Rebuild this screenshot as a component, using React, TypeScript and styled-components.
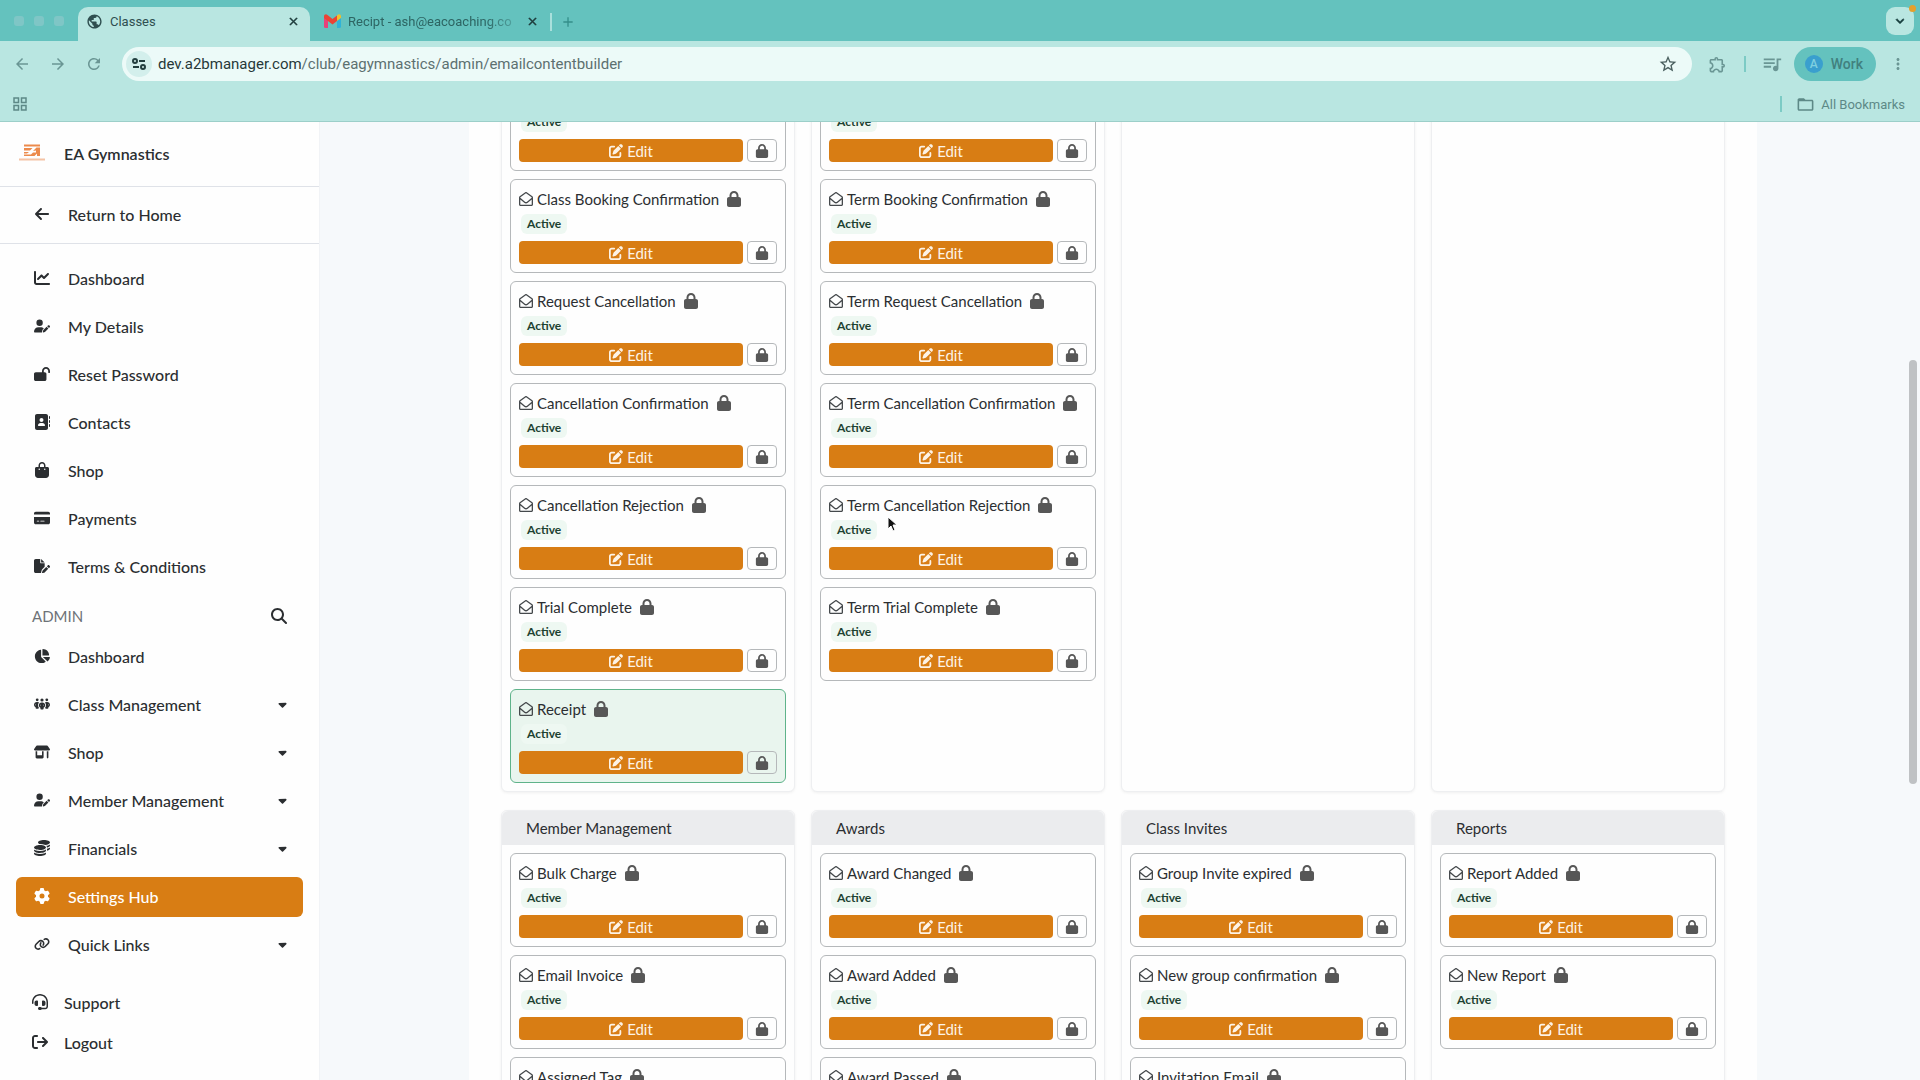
import React from "react";
import styled, { createGlobalStyle, css } from "styled-components";
import { IconType } from "react-icons";
import {
  FaAddressBook,
  FaArrowLeft,
  FaArrowRightFromBracket,
  FaBagShopping,
  FaCaretDown,
  FaChartLine,
  FaChartPie,
  FaCoins,
  FaCreditCard,
  FaFilePen,
  FaGear,
  FaHeadset,
  FaLink,
  FaLock,
  FaLockOpen,
  FaMagnifyingGlass,
  FaPenToSquare,
  FaPeopleGroup,
  FaRegEnvelopeOpen,
  FaShop,
  FaUserPen,
} from "react-icons/fa6";
import {
  MdAdd,
  MdArrowBack,
  MdArrowForward,
  MdClose,
  MdExpandMore,
  MdFolderOpen,
  MdGridView,
  MdMoreVert,
  MdOutlineExtension,
  MdPublic,
  MdQueueMusic,
  MdRefresh,
  MdStarBorder,
} from "react-icons/md";

interface INavItem {
  label: string;
  icon: IconType;
  active?: boolean;
  expandable?: boolean;
}

interface IEmail {
  title?: string;
  highlighted?: boolean;
}

interface IGroup {
  title?: string;
  emails: IEmail[];
}

const accountNav: INavItem[] = [
  { label: "Dashboard", icon: FaChartLine },
  { label: "My Details", icon: FaUserPen },
  { label: "Reset Password", icon: FaLockOpen },
  { label: "Contacts", icon: FaAddressBook },
  { label: "Shop", icon: FaBagShopping },
  { label: "Payments", icon: FaCreditCard },
  { label: "Terms & Conditions", icon: FaFilePen },
];

const adminNav: INavItem[] = [
  { label: "Dashboard", icon: FaChartPie },
  { label: "Class Management", icon: FaPeopleGroup, expandable: true },
  { label: "Shop", icon: FaShop, expandable: true },
  { label: "Member Management", icon: FaUserPen, expandable: true },
  { label: "Financials", icon: FaCoins, expandable: true },
  { label: "Settings Hub", icon: FaGear, active: true },
  { label: "Quick Links", icon: FaLink, expandable: true },
];

const bookingGroups: IGroup[] = [
  {
    emails: [
      {},
      { title: "Class Booking Confirmation" },
      { title: "Request Cancellation" },
      { title: "Cancellation Confirmation" },
      { title: "Cancellation Rejection" },
      { title: "Trial Complete" },
      { title: "Receipt", highlighted: true },
    ],
  },
  {
    emails: [
      {},
      { title: "Term Booking Confirmation" },
      { title: "Term Request Cancellation" },
      { title: "Term Cancellation Confirmation" },
      { title: "Term Cancellation Rejection" },
      { title: "Term Trial Complete" },
    ],
  },
  { emails: [] },
  { emails: [] },
];

const otherGroups: IGroup[] = [
  {
    title: "Member Management",
    emails: [{ title: "Bulk Charge" }, { title: "Email Invoice" }, { title: "Assigned Tag" }],
  },
  {
    title: "Awards",
    emails: [{ title: "Award Changed" }, { title: "Award Added" }, { title: "Award Passed" }],
  },
  {
    title: "Class Invites",
    emails: [
      { title: "Group Invite expired" },
      { title: "New group confirmation" },
      { title: "Invitation Email" },
    ],
  },
  {
    title: "Reports",
    emails: [{ title: "Report Added" }, { title: "New Report" }],
  },
];

const GmailLogo = () => (
  <svg width="17" height="14" viewBox="0 0 34 28" aria-hidden="true">
    <path d="M0 6v19a3 3 0 0 0 3 3h5V12z" fill="#e8417a" />
    <path d="M34 6v19a3 3 0 0 1-3 3h-5V12z" fill="#2fb3d9" />
    <path d="M26 3v11l8-6V5c0-4-4-6-7-3z" fill="#f2bf2c" />
    <path d="M0 5c0-4 4-6 7-3l10 8 9-7v11l-9 7L0 8z" fill="#ea4335" />
  </svg>
);

const ClubLogo = () => (
  <svg width="26" height="18" viewBox="0 0 52 36" aria-hidden="true">
    <g fill="#ec8a4c">
      <path d="M10 1h32v4H10zM10 8h17l-5 5H10zM10 16h10l-4 3h-6zM10 21h14l4-4h6v-4l-6 1 7-7h7v17h-6v-5l-5 5H10z" />
    </g>
    <path d="M0 31h52" stroke="#f4c3a5" strokeWidth="4" />
  </svg>
);

const SiteSettingsIcon = () => (
  <svg width="14" height="14" viewBox="0 0 14 14" fill="none" stroke="#223f3f" strokeWidth="2" aria-hidden="true">
    <circle cx="3" cy="4" r="2" />
    <path d="M7 4h6M1 10h6" />
    <circle cx="11" cy="10" r="2" />
  </svg>
);

const Pointer = () => (
  <PointerIcon width="11" height="17" viewBox="0 0 11 17" aria-hidden="true">
    <path d="M1 1v12l3-3 2 5 2-1-2-5h4z" fill="#111" stroke="#fff" strokeWidth="1" />
  </PointerIcon>
);

const BrowserChrome = () => (
  <Chrome>
    <TabStrip>
      <WindowDots>
        <i />
        <i />
        <i />
      </WindowDots>
      <Tab $current>
        <MdPublic size={17} />
        <span>Classes</span>
        <TabClose aria-label="Close Classes">
          <MdClose size={13} />
        </TabClose>
      </Tab>
      <Tab>
        <GmailLogo />
        <span>Recipt - ash@eacoaching.co</span>
        <TabClose aria-label="Close Recipt">
          <MdClose size={13} />
        </TabClose>
      </Tab>
      <NewTab aria-label="New tab">
        <MdAdd size={16} />
      </NewTab>
      <TabSearch aria-label="Search tabs">
        <MdExpandMore size={16} />
      </TabSearch>
    </TabStrip>
    <Toolbar>
      <ToolButton aria-label="Back">
        <MdArrowBack size={18} />
      </ToolButton>
      <ToolButton aria-label="Forward">
        <MdArrowForward size={18} />
      </ToolButton>
      <ToolButton aria-label="Reload">
        <MdRefresh size={18} />
      </ToolButton>
      <AddressBar>
        <SiteInfo aria-label="Site information">
          <SiteSettingsIcon />
        </SiteInfo>
        <Address>
          <b>dev.a2bmanager.com</b>/club/eagymnastics/admin/emailcontentbuilder
        </Address>
        <StarButton aria-label="Bookmark this page">
          <MdStarBorder size={20} />
        </StarButton>
      </AddressBar>
      <ToolActions>
        <ToolButton aria-label="Extensions">
          <MdOutlineExtension size={19} />
        </ToolButton>
        <Separator />
        <ToolButton aria-label="Media controls">
          <MdQueueMusic size={22} />
        </ToolButton>
        <Profile>
          <Avatar>A</Avatar>
          Work
        </Profile>
        <ToolButton aria-label="More">
          <MdMoreVert size={18} />
        </ToolButton>
      </ToolActions>
    </Toolbar>
    <Bookmarks>
      <BookmarkButton aria-label="Apps">
        <MdGridView size={18} />
      </BookmarkButton>
      <BookmarkGroup>
        <Separator />
        <BookmarkButton>
          <MdFolderOpen size={19} />
          All Bookmarks
        </BookmarkButton>
      </BookmarkGroup>
    </Bookmarks>
  </Chrome>
);

const NavList = ({ items }: { items: INavItem[] }) => (
  <List>
    {items.map(({ label, icon: Icon, active, expandable }) => (
      <li key={label}>
        <NavLink href="#" $active={active}>
          <NavIcon>
            <Icon />
          </NavIcon>
          {label}
          {expandable && <Caret size={13} />}
        </NavLink>
      </li>
    ))}
  </List>
);

const EmailCard = ({ title, highlighted }: IEmail) => (
  <Card $highlighted={highlighted}>
    {title && (
      <CardTitle>
        <FaRegEnvelopeOpen size={14} />
        <span>{title}</span>
        <FaLock size={16} />
      </CardTitle>
    )}
    <Badge>Active</Badge>
    <Actions>
      <EditButton>
        <FaPenToSquare size={14} />
        Edit
      </EditButton>
      <LockButton aria-label="Lock">
        <FaLock size={14} />
      </LockButton>
    </Actions>
  </Card>
);

const Board = ({ groups }: { groups: IGroup[] }) => (
  <Columns>
    {groups.map((group, index) => (
      <Column key={index}>
        {group.title && <ColumnTitle>{group.title}</ColumnTitle>}
        <Cards>
          {group.emails.map((email, i) => (
            <EmailCard key={i} {...email} />
          ))}
        </Cards>
      </Column>
    ))}
  </Columns>
);

const App = () => (
  <Page>
    <GlobalStyle />
    <BrowserChrome />
    <Body>
      <Sidebar>
        <Club>
          <ClubLogo />
          EA Gymnastics
        </Club>
        <Home>
          <NavLink href="#">
            <NavIcon>
              <FaArrowLeft />
            </NavIcon>
            Return to Home
          </NavLink>
        </Home>
        <Menu>
          <NavList items={accountNav} />
          <SectionHead>
            ADMIN
            <SearchButton aria-label="Search admin menu">
              <FaMagnifyingGlass size={16} />
            </SearchButton>
          </SectionHead>
          <NavList items={adminNav} />
        </Menu>
        <SidebarFooter>
          <FooterLink href="#">
            <FaHeadset size={16} />
            Support
          </FooterLink>
          <FooterLink href="#">
            <FaArrowRightFromBracket size={16} />
            Logout
          </FooterLink>
        </SidebarFooter>
      </Sidebar>
      <Main>
        <Content>
          <Board groups={bookingGroups} />
          <Board groups={otherGroups} />
        </Content>
        <ScrollThumb />
      </Main>
    </Body>
    <Pointer />
  </Page>
);

export default App;

const GlobalStyle = createGlobalStyle`
  * {
    box-sizing: border-box;
  }

  body {
    margin: 0;
    overflow: hidden;
    color: #2b2e31;
    font-family: Lato, "Open Sans", sans-serif;
    font-size: 16px;
  }

  button {
    padding: 0;
    border: 0;
    color: inherit;
    font: inherit;
    background: none;
    cursor: pointer;
  }

  a {
    color: inherit;
    text-decoration: none;
  }

  svg {
    flex: none;
  }
`;

const Page = styled.div`
  display: flex;
  flex-direction: column;
  height: 100vh;
`;

const Chrome = styled.header`
  flex: none;
  color: #5d8987;
  font-family: Roboto, sans-serif;
  font-size: 13px;
  background-color: #b9e6e1;
  border-bottom: 1px solid #9ccfc9;
`;

const TabStrip = styled.div`
  display: flex;
  align-items: flex-end;
  height: 41px;
  padding-right: 6px;
  background-color: #64c2be;
`;

const WindowDots = styled.div`
  display: flex;
  align-self: center;
  gap: 10px;
  width: 78px;
  padding-left: 14px;

  i {
    width: 10px;
    height: 10px;
    border-radius: 3px;
    background-color: #7fc6c6;
  }
`;

const Tab = styled.div<{ $current?: boolean }>`
  display: flex;
  align-items: center;
  gap: 7px;
  width: 232px;
  height: 34px;
  padding: 0 10px 6px 8px;
  color: #2d6563;
  border-radius: 10px 10px 0 0;

  ${({ $current }) =>
    $current
      ? css`
          color: #2f4f50;
          background-color: #b9e6e1;
        `
      : css`
          width: 240px;
          padding: 0 11px 6px 14px;

          span {
            mask-image: linear-gradient(90deg, #000 80%, rgba(0, 0, 0, 0.2));
          }
        `}

  span {
    flex: 1;
    overflow: hidden;
    white-space: nowrap;
  }
`;

const TabClose = styled.button`
  display: flex;
  color: #1d3b3b;

  path:last-child {
    stroke: currentColor;
    stroke-width: 1;
  }
`;

const NewTab = styled.button`
  display: flex;
  align-items: center;
  height: 18px;
  margin-bottom: 10px;
  padding-left: 8px;
  color: #348f8b;
  border-left: 2px solid #a9e0dc;
`;

const TabSearch = styled.button`
  display: flex;
  align-items: center;
  justify-content: center;
  position: relative;
  width: 28px;
  height: 28px;
  margin-left: auto;
  margin-bottom: 6px;
  color: #163c3c;
  background-color: #b9e6e1;
  border-radius: 9px;

  path:last-child {
    stroke: currentColor;
    stroke-width: 1;
  }

  &::after {
    content: "";
    position: absolute;
    top: -2px;
    right: -2px;
    width: 7px;
    height: 7px;
    border-radius: 50%;
    background-color: #e5a02c;
  }
`;

const Toolbar = styled.div`
  display: flex;
  align-items: center;
  padding: 6px 4px;
`;

const ToolButton = styled.button`
  display: flex;
  align-items: center;
  justify-content: center;
  width: 36px;
  color: #6a9694;
`;

const AddressBar = styled.div`
  display: flex;
  align-items: center;
  flex: 1;
  height: 34px;
  margin: 0 8px 0 10px;
  padding: 0 14px 0 4px;
  background-color: #ecfaf8;
  border-radius: 17px;
`;

const SiteInfo = styled.button`
  display: flex;
  align-items: center;
  justify-content: center;
  width: 26px;
  height: 26px;
  border-radius: 50%;
  background-color: #d3efec;
`;

const Address = styled.span`
  flex: 1;
  margin-left: 6px;
  color: #5c7070;
  font-size: 15px;

  b {
    color: #263838;
    font-weight: 400;
  }
`;

const StarButton = styled.button`
  display: flex;
  color: #4a5f5f;
`;

const ToolActions = styled.div`
  display: flex;
  align-items: center;
`;

const Separator = styled.span`
  width: 2px;
  height: 16px;
  margin: 0 8px;
  background-color: #7ccbc5;
`;

const Profile = styled.button`
  display: flex;
  align-items: center;
  gap: 8px;
  height: 34px;
  margin: 0 4px;
  padding: 0 13px 0 11px;
  color: #41807e;
  font-size: 14px;
  font-weight: 500;
  background-color: #64c2be;
  border-radius: 17px;
`;

const Avatar = styled.span`
  width: 18px;
  height: 18px;
  color: #7fd0e0;
  font-size: 12px;
  line-height: 18px;
  text-align: center;
  border-radius: 50%;
  background-color: #3a9fce;
`;

const Bookmarks = styled.div`
  display: flex;
  align-items: center;
  justify-content: space-between;
  height: 34px;
  padding: 0 15px 0 11px;
`;

const BookmarkButton = styled.button`
  display: flex;
  align-items: center;
  gap: 6px;
`;

const BookmarkGroup = styled.div`
  display: flex;
  align-items: center;
  gap: 6px;
`;

const Body = styled.div`
  display: flex;
  flex: 1;
  min-height: 0;
`;

const Sidebar = styled.aside`
  display: flex;
  flex-direction: column;
  flex: none;
  width: 320px;
  font-weight: 500;
  background-color: #fefefe;
  border-right: 1px solid #f1f3f6;
`;

const Club = styled.div`
  display: flex;
  align-items: center;
  gap: 19px;
  height: 65px;
  padding: 0 19px 2px;
  font-weight: 600;
  border-bottom: 1px solid #dfe2e8;
`;

const Home = styled.div`
  padding: 8px 16px;
  border-bottom: 1px solid #dfe2e8;
`;

const Menu = styled.nav`
  padding: 15px 16px 0;
`;

const List = styled.ul`
  display: flex;
  flex-direction: column;
  gap: 8px;
  margin: 0;
  padding: 0;
  list-style: none;
`;

const NavLink = styled.a<{ $active?: boolean }>`
  display: flex;
  align-items: center;
  height: 40px;
  padding: 0 14px 2px 16px;
  color: ${({ $active }) => ($active ? "#fff" : "#2b2e31")};
  background-color: ${({ $active }) => ($active ? "#d87d14" : "transparent")};
  border-radius: 6px;
`;

const NavIcon = styled.span`
  display: flex;
  justify-content: center;
  width: 20px;
  margin-right: 16px;

  svg {
    width: auto;
    height: 16px;
  }
`;

const Caret = styled(FaCaretDown)`
  margin-left: auto;
`;

const SectionHead = styled.div`
  display: flex;
  align-items: center;
  justify-content: space-between;
  height: 50px;
  padding: 8px 16px 0;
  color: #6d7277;
  font-size: 15px;
  font-weight: 400;
`;

const SearchButton = styled.button`
  display: flex;
  color: #2b2e31;
`;

const SidebarFooter = styled.div`
  margin-top: auto;
  padding: 0 16px 17px;
`;

const FooterLink = styled.a`
  display: flex;
  align-items: center;
  gap: 16px;
  height: 40px;
  padding: 0 16px 2px;
`;

const Main = styled.main`
  position: relative;
  flex: 1;
  padding-right: 14px;
  overflow: hidden;
  background-color: #f6f9fb;
`;

const Content = styled.div`
  display: flex;
  flex-direction: column;
  gap: 18px;
  max-width: 1288px;
  margin: 0 auto;
  padding: 0 32px;
  background-color: #fefefe;
`;

const Columns = styled.div`
  display: grid;
  grid-template-columns: repeat(4, 1fr);
  gap: 16px;

  /* the board is scrolled part of the way down */
  &:first-child {
    margin-top: -28px;
  }
`;

const Column = styled.section`
  background-color: #fefefe;
  border: 1px solid #eeeff1;
  border-radius: 6px;
  box-shadow: 0 1px 3px rgba(0, 0, 0, 0.06);
`;

const ColumnTitle = styled.h2`
  margin: 0;
  padding: 0 24px;
  font-size: 15px;
  font-weight: 400;
  line-height: 34px;
  background-color: #ebecee;
  border-radius: 6px 6px 0 0;
`;

const Cards = styled.div`
  display: flex;
  flex-direction: column;
  gap: 8px;
  padding: 8px;
`;

const Card = styled.article<{ $highlighted?: boolean }>`
  padding: 8px;
  background-color: ${({ $highlighted }) => ($highlighted ? "#e9f5ee" : "#fefefe")};
  border: 1px solid ${({ $highlighted }) => ($highlighted ? "#5fb38a" : "#b5b8ba")};
  border-radius: 6px;
`;

const CardTitle = styled.h3`
  display: flex;
  align-items: center;
  gap: 4px;
  margin: 0 0 4px;
  font-size: 15px;
  font-weight: 400;
  line-height: 22px;
  white-space: nowrap;

  svg:first-child {
    color: #45494c;
  }

  svg:last-child {
    margin-left: 3px;
    color: #575757;
  }
`;

const Badge = styled.span`
  display: block;
  width: fit-content;
  margin: 0 0 7px 2px;
  padding: 0 6px;
  color: #1d4231;
  font-size: 12px;
  font-weight: 700;
  line-height: 20px;
  background-color: #eef8f2;
  border-radius: 6px;
`;

const Actions = styled.div`
  display: flex;
  gap: 4px;
`;

const EditButton = styled.button`
  display: flex;
  align-items: center;
  justify-content: center;
  flex: 1;
  gap: 4px;
  height: 23px;
  color: #fdf3e6;
  font-size: 15px;
  background-color: #d87d14;
  border-radius: 4px;
`;

const LockButton = styled.button`
  display: flex;
  align-items: center;
  justify-content: center;
  width: 30px;
  height: 23px;
  color: #575757;
  border: 1px solid #b5b8ba;
  border-radius: 4px;
`;

const ScrollThumb = styled.div`
  position: absolute;
  top: 238px;
  right: 3px;
  width: 8px;
  height: 424px;
  border-radius: 4px;
  background-color: #bfc2c4;
`;

const PointerIcon = styled.svg`
  position: fixed;
  top: 516px;
  left: 887px;
`;
